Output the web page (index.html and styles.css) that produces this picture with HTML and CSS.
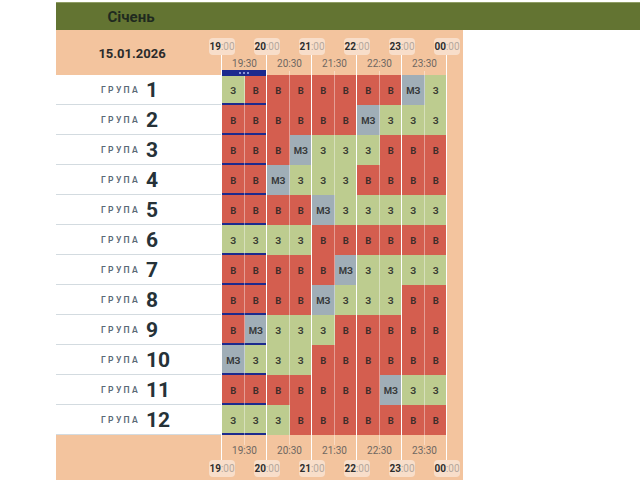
FILE: index.html
```html
<!DOCTYPE html>
<html lang="uk">
<head>
<meta charset="utf-8">
<title>Графік</title>
<link rel="stylesheet" href="styles.css">
</head>
<body>
<div class="page">
  <div class="month"><span class="month-name">Січень</span></div>
  <div class="sheet">
    <div class="band head">
      <div class="date">15.01.2026</div>
      <div class="scale">
        <div class="pills">
          <span class="pill"><b>19</b>:00</span>
          <span class="pill"><b>20</b>:00</span>
          <span class="pill"><b>21</b>:00</span>
          <span class="pill"><b>22</b>:00</span>
          <span class="pill"><b>23</b>:00</span>
          <span class="pill"><b>00</b>:00</span>
        </div>
        <div class="halfs"><span>19:30</span><span>20:30</span><span>21:30</span><span>22:30</span><span>23:30</span></div>
        <div class="now-bar"><i class="dot"></i><i class="dot"></i><i class="dot"></i></div>
      </div>
    </div>

    <div class="band row">
      <div class="label"><span class="word">ГРУПА</span><span class="num">1</span></div>
      <div class="cells">
        <div class="c on now">З</div><div class="c off now">В</div><div class="c off">В</div><div class="c off">В</div><div class="c off">В</div><div class="c off">В</div><div class="c off">В</div><div class="c off">В</div><div class="c maybe">МЗ</div><div class="c on">З</div>
      </div>
    </div>
    <div class="band row">
      <div class="label"><span class="word">ГРУПА</span><span class="num">2</span></div>
      <div class="cells">
        <div class="c off now">В</div><div class="c off now">В</div><div class="c off">В</div><div class="c off">В</div><div class="c off">В</div><div class="c off">В</div><div class="c maybe">МЗ</div><div class="c on">З</div><div class="c on">З</div><div class="c on">З</div>
      </div>
    </div>
    <div class="band row">
      <div class="label"><span class="word">ГРУПА</span><span class="num">3</span></div>
      <div class="cells">
        <div class="c off now">В</div><div class="c off now">В</div><div class="c off">В</div><div class="c maybe">МЗ</div><div class="c on">З</div><div class="c on">З</div><div class="c on">З</div><div class="c off">В</div><div class="c off">В</div><div class="c off">В</div>
      </div>
    </div>
    <div class="band row">
      <div class="label"><span class="word">ГРУПА</span><span class="num">4</span></div>
      <div class="cells">
        <div class="c off now">В</div><div class="c off now">В</div><div class="c maybe">МЗ</div><div class="c on">З</div><div class="c on">З</div><div class="c on">З</div><div class="c off">В</div><div class="c off">В</div><div class="c off">В</div><div class="c off">В</div>
      </div>
    </div>
    <div class="band row">
      <div class="label"><span class="word">ГРУПА</span><span class="num">5</span></div>
      <div class="cells">
        <div class="c off now">В</div><div class="c off now">В</div><div class="c off">В</div><div class="c off">В</div><div class="c maybe">МЗ</div><div class="c on">З</div><div class="c on">З</div><div class="c on">З</div><div class="c on">З</div><div class="c on">З</div>
      </div>
    </div>
    <div class="band row">
      <div class="label"><span class="word">ГРУПА</span><span class="num">6</span></div>
      <div class="cells">
        <div class="c on now">З</div><div class="c on now">З</div><div class="c on">З</div><div class="c on">З</div><div class="c off">В</div><div class="c off">В</div><div class="c off">В</div><div class="c off">В</div><div class="c off">В</div><div class="c off">В</div>
      </div>
    </div>
    <div class="band row">
      <div class="label"><span class="word">ГРУПА</span><span class="num">7</span></div>
      <div class="cells">
        <div class="c off now">В</div><div class="c off now">В</div><div class="c off">В</div><div class="c off">В</div><div class="c off">В</div><div class="c maybe">МЗ</div><div class="c on">З</div><div class="c on">З</div><div class="c on">З</div><div class="c on">З</div>
      </div>
    </div>
    <div class="band row">
      <div class="label"><span class="word">ГРУПА</span><span class="num">8</span></div>
      <div class="cells">
        <div class="c off now">В</div><div class="c off now">В</div><div class="c off">В</div><div class="c off">В</div><div class="c maybe">МЗ</div><div class="c on">З</div><div class="c on">З</div><div class="c on">З</div><div class="c off">В</div><div class="c off">В</div>
      </div>
    </div>
    <div class="band row">
      <div class="label"><span class="word">ГРУПА</span><span class="num">9</span></div>
      <div class="cells">
        <div class="c off now">В</div><div class="c maybe now">МЗ</div><div class="c on">З</div><div class="c on">З</div><div class="c on">З</div><div class="c off">В</div><div class="c off">В</div><div class="c off">В</div><div class="c off">В</div><div class="c off">В</div>
      </div>
    </div>
    <div class="band row">
      <div class="label"><span class="word">ГРУПА</span><span class="num">10</span></div>
      <div class="cells">
        <div class="c maybe now">МЗ</div><div class="c on now">З</div><div class="c on">З</div><div class="c on">З</div><div class="c off">В</div><div class="c off">В</div><div class="c off">В</div><div class="c off">В</div><div class="c off">В</div><div class="c off">В</div>
      </div>
    </div>
    <div class="band row">
      <div class="label"><span class="word">ГРУПА</span><span class="num">11</span></div>
      <div class="cells">
        <div class="c off now">В</div><div class="c off now">В</div><div class="c off">В</div><div class="c off">В</div><div class="c off">В</div><div class="c off">В</div><div class="c off">В</div><div class="c maybe">МЗ</div><div class="c on">З</div><div class="c on">З</div>
      </div>
    </div>
    <div class="band row">
      <div class="label"><span class="word">ГРУПА</span><span class="num">12</span></div>
      <div class="cells">
        <div class="c on now">З</div><div class="c on now">З</div><div class="c on">З</div><div class="c off">В</div><div class="c off">В</div><div class="c off">В</div><div class="c off">В</div><div class="c off">В</div><div class="c off">В</div><div class="c off">В</div>
      </div>
    </div>

    <div class="band foot">
      <div class="scale">
        <div class="halfs"><span>19:30</span><span>20:30</span><span>21:30</span><span>22:30</span><span>23:30</span></div>
        <div class="pills">
          <span class="pill"><b>19</b>:00</span>
          <span class="pill"><b>20</b>:00</span>
          <span class="pill"><b>21</b>:00</span>
          <span class="pill"><b>22</b>:00</span>
          <span class="pill"><b>23</b>:00</span>
          <span class="pill"><b>00</b>:00</span>
        </div>
      </div>
    </div>

    <div class="lines">
      <i class="hl"></i><i class="hl"></i><i class="hl"></i><i class="hl"></i><i class="hl"></i><i class="hl"></i>
      <i class="hh"></i><i class="hh"></i><i class="hh"></i><i class="hh"></i><i class="hh"></i>
    </div>
  </div>
</div>
</body>
</html>
```

FILE: styles.css
```css
* { box-sizing: border-box; }
html, body { margin: 0; padding: 0; background: #fff; }
body { font-family: Roboto, "Noto Sans", "DejaVu Sans", sans-serif; }

.page { padding: 2px 0 0 56px; }

.month {
  height: 28px;
  background: #637432;
  border-top: 1px solid #8f9d64;
  display: flex;
  align-items: center;
}
.month-name {
  width: 150px;
  text-align: center;
  font-weight: 700;
  font-size: 15px;
  color: #1f2a1f;
}

.sheet {
  position: relative;
  width: 407px;
  background: #f3c49e;
}

.band {
  display: grid;
  grid-template-columns: 166px 225px 16px;
}

/* header */
.head { height: 45px; }
.date {
  display: flex;
  align-items: center;
  justify-content: center;
  padding-right: 14px;
  font-weight: 700;
  font-size: 13px;
  color: #2b2b2b;
}
.scale { display: flex; flex-direction: column; }
.head .scale { padding-top: 8px; }

.pills {
  display: flex;
  justify-content: space-between;
  width: 251px;
  margin-left: -13px;
  position: relative;
  z-index: 2;
}
.pill {
  width: 26px;
  height: 17px;
  border-radius: 4px;
  background: rgba(255, 255, 255, 0.45);
  font-size: 10px;
  line-height: 17px;
  text-align: center;
  color: #b5a89d;
  white-space: nowrap;
}
.pill b { color: #2e2e2e; font-weight: 700; }

.halfs { display: flex; }
.halfs span {
  flex: 1;
  text-align: center;
  font-size: 10px;
  line-height: 12px;
  color: #6f6761;
}
.head .halfs { margin-top: 3px; }

.now-bar {
  width: 44px;
  height: 6px;
  margin-top: auto;
  background: #1c2a8e;
  display: flex;
  align-items: center;
  justify-content: center;
  gap: 2px;
  position: relative;
  z-index: 2;
}
.dot {
  width: 2px;
  height: 2px;
  border-radius: 50%;
  background: #a9b8ee;
}

/* rows */
.row { height: 30px; }
.label {
  background: #fff;
  border-bottom: 1px solid #d3dbe0;
  display: flex;
  align-items: center;
  padding-left: 45px;
  gap: 6px;
}
.word {
  font-size: 8.6px;
  letter-spacing: 2.3px;
  font-weight: 600;
  color: #5a6976;
}
.num {
  font-size: 21px;
  font-weight: 700;
  color: #263238;
}

.cells {
  display: grid;
  grid-template-columns: repeat(10, 22.5px);
}
.c {
  display: flex;
  align-items: center;
  justify-content: center;
  font-size: 9.5px;
  font-weight: 700;
  color: rgba(35, 35, 35, 0.85);
}
.off { background: #d45e4f; }
.on { background: #bdcc8f; }
.maybe { background: #a0aeb7; }
.now { box-shadow: inset 0 -2px 0 #1c2a8e; }

/* footer */
.foot { height: 45px; }
.foot .scale { grid-column: 2; padding-top: 10px; }
.foot .pills { margin-top: 3px; }

/* time lines overlay */
.lines {
  position: absolute;
  left: 166px;
  top: 0;
  bottom: 0;
  width: 225px;
  pointer-events: none;
  z-index: 1;
}
.hl {
  position: absolute;
  top: 25px;
  bottom: 20px;
  width: 1px;
  background: #fff;
}
.hh {
  position: absolute;
  top: 41px;
  bottom: 35px;
  width: 1px;
  background: rgba(255, 255, 255, 0.4);
}
.hl:nth-child(1) { left: -1px; }
.hl:nth-child(2) { left: 44px; }
.hl:nth-child(3) { left: 89px; }
.hl:nth-child(4) { left: 134px; }
.hl:nth-child(5) { left: 179px; }
.hl:nth-child(6) { left: 224px; }
.hh:nth-child(7) { left: 22px; }
.hh:nth-child(8) { left: 67px; }
.hh:nth-child(9) { left: 112px; }
.hh:nth-child(10) { left: 157px; }
.hh:nth-child(11) { left: 202px; }
```
